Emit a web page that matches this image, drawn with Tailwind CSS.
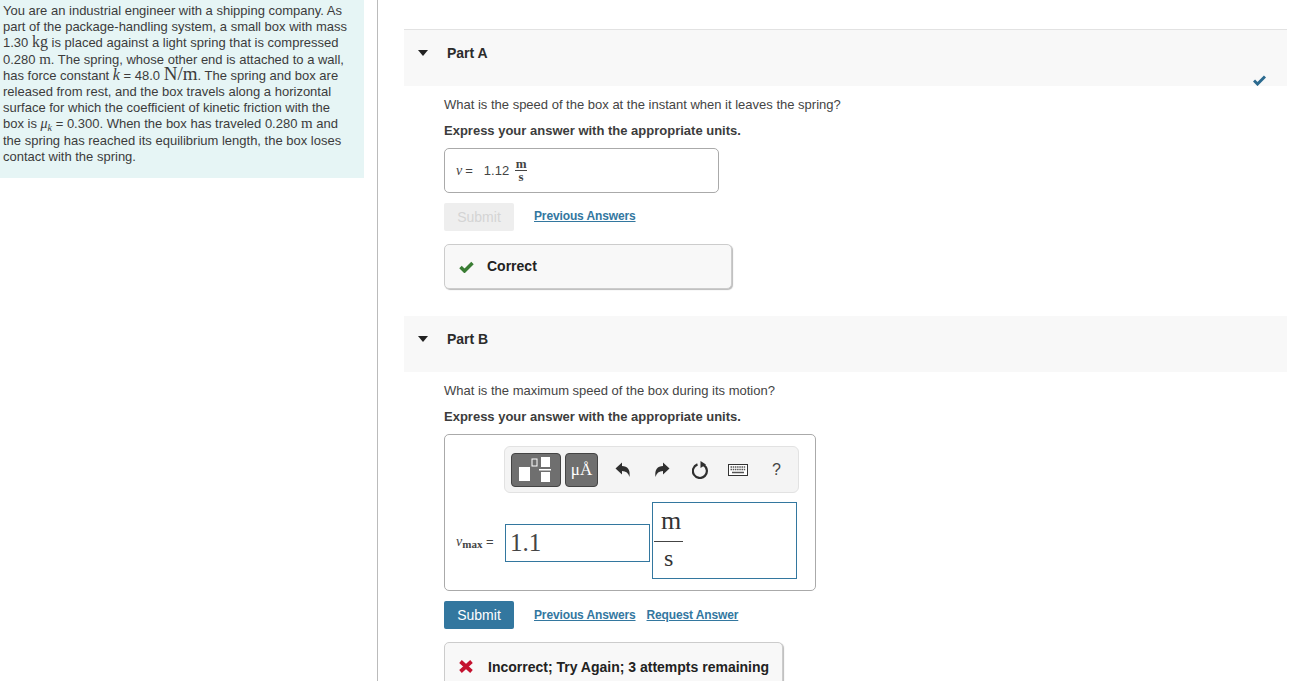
<!DOCTYPE html>
<html lang="en">
<head>
  <meta charset="UTF-8" />
  <title>Part A / Part B</title>
  <script src="https://cdn.jsdelivr.net/npm/@tailwindcss/browser@4"></script>
</head>
<body class="bg-white text-[#333] font-['Liberation_Sans',Arial,sans-serif] text-[13px]">
  <div class="flex h-[681px] overflow-hidden">

    <!-- problem text -->
    <aside class="w-[378px] shrink-0 border-r border-[#bbb] pr-[13px]">
      <div class="bg-[#e6f5f5] h-[178px] pl-[3px] pr-[14px] pt-[3px] leading-[16.2px] text-[#3c3c3c]">
        You are an industrial engineer with a shipping company. As part of the package-handling system, a small box with mass 1.30 <span class="font-['Liberation_Serif',serif] text-[16px] font-medium leading-[0]">kg</span> is placed against a light spring that is compressed 0.280 <span class="font-['Liberation_Serif',serif] text-[15px] leading-[0]">m</span>. The spring, whose other end is attached to a wall, has force constant <i class="font-['Liberation_Serif',serif] text-[16px] leading-[0]">k</i> = 48.0 <span class="font-['Liberation_Serif',serif] text-[19px] leading-[0]">N/m</span>. The spring and box are released from rest, and the box travels along a horizontal surface for which the coefficient of kinetic friction with the box is <i class="font-['Liberation_Serif',serif] text-[14px] leading-[0]">μ<sub class="text-[10px] leading-[0]">k</sub></i> = 0.300. When the box has traveled 0.280 <span class="font-['Liberation_Serif',serif] text-[15px] leading-[0]">m</span> and the spring has reached its equilibrium length, the box loses contact with the spring.
      </div>
    </aside>

    <main class="flex-1 pl-[26px] pr-[19px] pt-[29px]">
      <!-- Part A -->
      <section class="relative">
        <div class="flex h-[57px] items-start border-t border-[#e2e2e2] bg-[#f8f8f8] pt-[14px]">
          <span class="ml-[14px] mt-[6px] h-0 w-0 border-x-[5.5px] border-t-[6px] border-x-transparent border-t-[#222]"></span>
          <h2 class="ml-[19px] text-[14px] leading-[18px] font-bold text-[#2b2b2b]">Part A</h2>
        </div>
        <svg class="absolute right-[21px] top-[46px] h-[11px] w-[13px]" viewBox="0 0 13 11"><path d="M1 5.500l3.500 3.500L12 1.500" fill="none" stroke="#2b6a8f" stroke-width="3"/></svg>
        <div class="pl-[40px]">
          <p class="mt-[11px] leading-[16px] text-[#444]">What is the speed of the box at the instant when it leaves the spring?</p>
          <p class="mt-[10px] font-bold leading-[16px] text-[#3c3c3c]">Express your answer with the appropriate units.</p>
          <div class="mt-[9px] flex h-[45px] w-[275px] items-center rounded-[5px] border border-[#aaa] pl-[11px] text-[#444]">
            <i class="font-['Liberation_Serif',serif] text-[14px]">v</i><span class="ml-[3px]">=</span>
            <span class="ml-[11px]">1.12</span>
            <span class="ml-[6px] flex flex-col items-center font-['Liberation_Serif',serif] text-[13px] font-bold leading-[12px]">
              <span>m</span><span class="w-[12px] border-t border-[#444]"></span><span>s</span>
            </span>
          </div>
          <div class="mt-[10px] flex items-center">
            <button class="h-[28px] w-[70px] rounded-[2px] bg-[#eee] text-[14px] text-[#d4d4d4]">Submit</button>
            <a class="ml-[20px] -mt-[2px] text-[12px] tracking-[-0.13px] font-bold text-[#33779f] underline">Previous Answers</a>
          </div>
          <div class="mt-[13px] flex h-[45px] w-[288px] items-center rounded-[5px] border border-[#ccc] bg-[#f8f8f8] pl-[14px] shadow-[1px_1px_1px_#bbb]">
            <svg class="h-[12px] w-[15px]" viewBox="0 0 15 12"><path d="M1.500 6l4 4L13.500 2" fill="none" stroke="#3a7d34" stroke-width="3.500"/></svg>
            <span class="ml-[13px] text-[14px] font-bold text-[#222]">Correct</span>
          </div>
        </div>
      </section>

      <!-- Part B -->
      <section class="mt-[27px]">
        <div class="flex h-[56px] items-start bg-[#f8f8f8] pt-[14px]">
          <span class="ml-[14px] mt-[6px] h-0 w-0 border-x-[5.5px] border-t-[6px] border-x-transparent border-t-[#222]"></span>
          <h2 class="ml-[19px] text-[14px] leading-[18px] font-bold text-[#2b2b2b]">Part B</h2>
        </div>
        <div class="pl-[40px]">
          <p class="mt-[11px] leading-[16px] text-[#444]">What is the maximum speed of the box during its motion?</p>
          <p class="mt-[10px] font-bold leading-[16px] text-[#3c3c3c]">Express your answer with the appropriate units.</p>

          <div class="mt-[9px] h-[157px] w-[372px] rounded-[5px] border border-[#aaa] pt-[11px]">
            <!-- toolbar -->
            <div class="ml-[59px] flex h-[47px] w-[295px] items-center rounded-[6px] border border-[#e2e2e2] bg-[#f4f4f4] pl-[6px]">
              <div class="flex h-[34px] w-[50px] items-center justify-center rounded-[4px] border border-[#444] bg-[#6f6f6f]">
                <svg class="h-[27px] w-[36px]" viewBox="0 0 36 27">
                  <rect x="1" y="11" width="11" height="14" fill="#fff"/>
                  <rect x="14" y="3" width="5" height="7" fill="none" stroke="#fff"/>
                  <rect x="23" y="1" width="9" height="10" fill="#fff"/>
                  <rect x="21" y="13" width="12" height="1.500" fill="#fff"/>
                  <rect x="23" y="16" width="9" height="10" fill="#fff"/>
                </svg>
              </div>
              <div class="ml-[4px] flex h-[34px] w-[33px] items-center justify-center rounded-[4px] border border-[#444] bg-[#6f6f6f] font-['Liberation_Serif',serif] text-[17px] text-white">μÅ</div>
              <svg class="ml-[17px] h-[16px] w-[16px]" viewBox="0 0 16 16"><path d="M0.500 6.500L7 0.500v3.500c5.500 0 8.500 3.500 7.500 11-1-4-3.500-6-7.500-6v3.500z" fill="#2f2f2f"/></svg>
              <svg class="ml-[23px] h-[16px] w-[16px]" viewBox="0 0 16 16"><path d="M15.500 6.500L9 0.500v3.500C3.500 4 0.500 7.500 1.500 15c1-4 3.500-6 7.500-6v3.500z" fill="#2f2f2f"/></svg>
              <svg class="ml-[22px] h-[18px] w-[18px]" viewBox="0 0 18 18"><path d="M11.500 4A7 7 0 1 1 5.500 3.400" fill="none" stroke="#2f2f2f" stroke-width="2.200"/><path d="M8.500 0l5.500 3.500L8.500 7z" fill="#2f2f2f"/></svg>
              <svg class="ml-[18px] h-[12px] w-[20px]" viewBox="0 0 20 12">
                <rect x=".5" y=".5" width="19" height="11" fill="#fff" stroke="#333"/>
                <path d="M2.500 3h15M2.500 5.500h15" stroke="#555" stroke-width="1.500" stroke-dasharray="1.500 .7"/>
                <path d="M4 8.500h12" stroke="#555" stroke-width="1.500"/>
              </svg>
              <span class="ml-[24px] text-[16px] text-[#444]">?</span>
            </div>
            <!-- answer row -->
            <div class="mt-[9px] flex items-center">
              <span class="ml-[11px] mt-[2px] w-[49px] text-[#444]"><i class="font-['Liberation_Serif',serif] text-[14px]">v</i><span class="font-['Liberation_Serif',serif] text-[11px] font-bold align-[-2px]">max</span> <span class="text-[13px]">=</span></span>
              <div class="mt-[4px] flex h-[38px] w-[145px] items-center border border-[#33779f] pl-[4px] font-['Liberation_Serif',serif] text-[25px] text-[#444]">1.1</div>
              <div class="ml-[2px] flex h-[77px] w-[145px] flex-col items-start border border-[#33779f] pl-[1px] font-['Liberation_Serif',serif] text-[26px] text-[#333]">
                <span class="ml-[7px] mt-[4px] leading-[28px]">m</span>
                <span class="mt-[6px] h-px w-[29px] bg-[#444]"></span>
                <span class="ml-[10px] mt-[2px] text-[24px] leading-[28px]">s</span>
              </div>
            </div>
          </div>

          <div class="mt-[10px] flex items-center">
            <button class="h-[28px] w-[70px] rounded-[2px] bg-[#33779f] text-[14px] text-white">Submit</button>
            <a class="ml-[20px] text-[12px] tracking-[-0.13px] font-bold text-[#33779f] underline">Previous Answers</a>
            <a class="ml-[11px] text-[12px] tracking-[-0.13px] font-bold text-[#33779f] underline">Request Answer</a>
          </div>
          <div class="mt-[13px] flex h-[60px] w-[339px] items-start rounded-[5px] border border-[#ccc] bg-[#f8f8f8] pl-[14px] pt-[14px] shadow-[1px_1px_1px_#bbb]">
            <svg class="mt-[3px] h-[13px] w-[14px]" viewBox="0 0 14 13"><path d="M1.500 1.500l11 10M12.500 1.500l-11 10" fill="none" stroke="#c4122f" stroke-width="3.800"/></svg>
            <span class="ml-[15px] text-[14px] font-bold text-[#222]">Incorrect; Try Again; 3 attempts remaining</span>
          </div>
        </div>
      </section>
    </main>
  </div>
</body>
</html>
